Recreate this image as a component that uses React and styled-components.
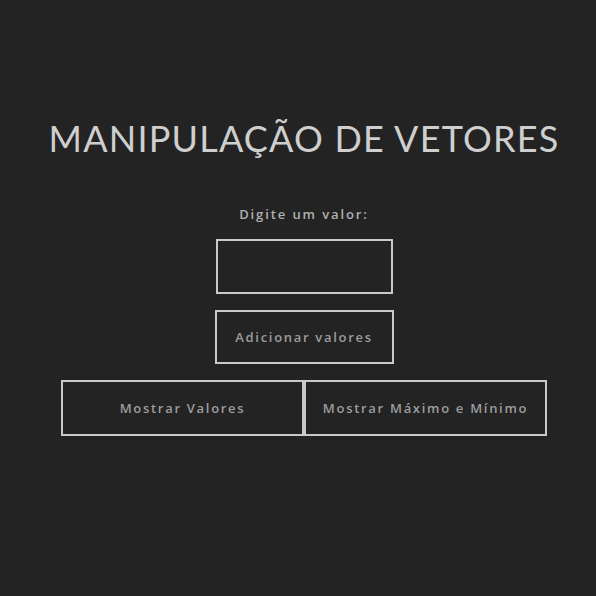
import React from 'react'
import styled, { createGlobalStyle } from 'styled-components'

const GlobalStyle = createGlobalStyle`
  body {
    margin: 0;
    background: #232323;
    font-family: "Open Sans", "Liberation Sans", sans-serif;
  }
`

function App() {
  return (
    <Page>
      <GlobalStyle />
      <Title>MANIPULAÇÃO DE VETORES</Title>
      <Label htmlFor="valor">Digite um valor:</Label>
      <Input id="valor" type="text" />
      <Button>Adicionar valores</Button>
      <ButtonRow>
        <Button wide>Mostrar Valores</Button>
        <Button wide>Mostrar Máximo e Mínimo</Button>
      </ButtonRow>
    </Page>
  )
}

export default App

const Page = styled.div`
  width: 596px;
  height: 596px;
  display: flex;
  flex-direction: column;
  align-items: center;
  padding: 117px 0 0 12px;
  box-sizing: border-box;
`
const Title = styled.h1`
  margin: 0;
  font-family: "Lato", sans-serif;
  font-weight: 400;
  font-size: 36px;
  letter-spacing: 1.2px;
  color: #cfcfcf;
  line-height: 42px;
`
const Label = styled.label`
  margin-top: 47px;
  font-size: 13px;
  font-weight: 600;
  letter-spacing: 1.9px;
  color: #b0b0b0;
  line-height: 16px;
`
const Input = styled.input`
  margin-top: 17px;
  width: 177px;
  height: 55px;
  box-sizing: border-box;
  background: transparent;
  border: 2px solid #c9c9c9;
  outline: none;
  color: #ddd;
`
const Button = styled.button`
  margin-top: ${p => (p.wide ? '0' : '16px')};
  width: ${p => (p.wide ? '243px' : '179px')};
  height: ${p => (p.wide ? '56px' : '54px')};
  box-sizing: border-box;
  background: transparent;
  border: 2px solid #c9c9c9;
  color: #9c9c9c;
  font-family: "Open Sans", sans-serif;
  font-size: 13px;
  font-weight: 600;
  letter-spacing: 1.7px;
  cursor: pointer;
`
const ButtonRow = styled.div`
  margin-top: 16px;
  display: flex;
`
